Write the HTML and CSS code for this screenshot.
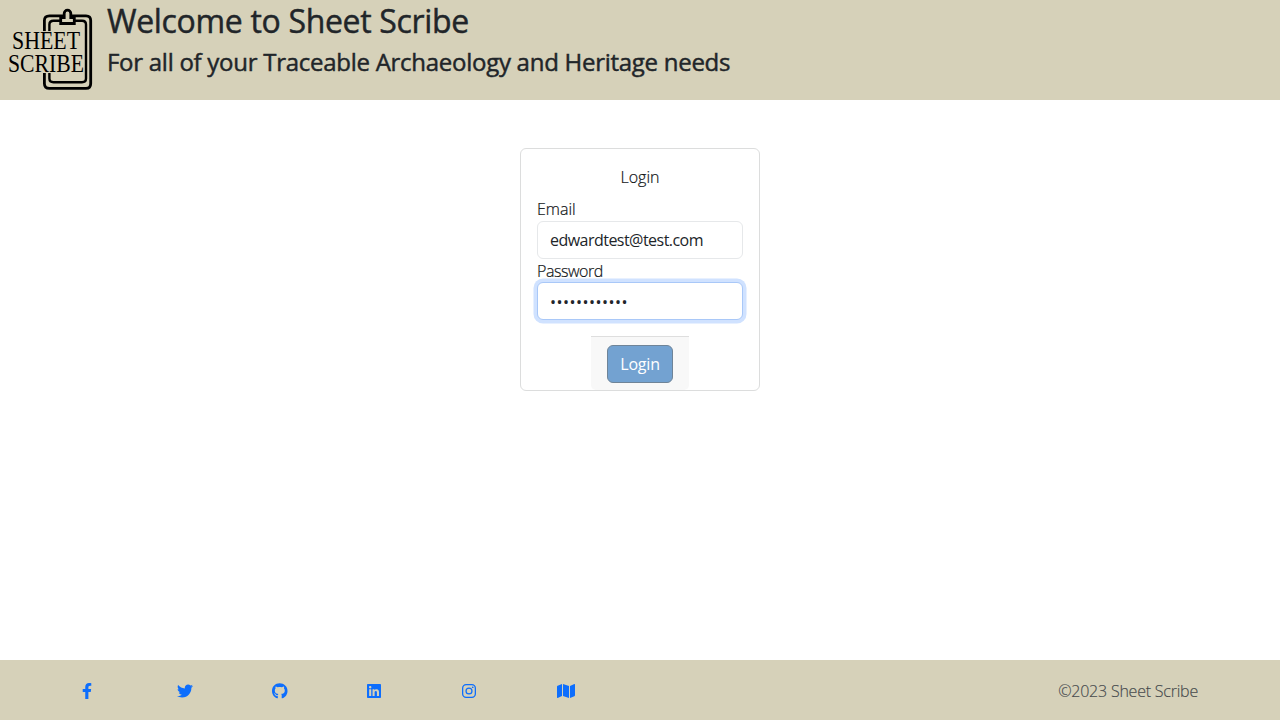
FILE: index.html
```
<!DOCTYPE html>
<html lang="en">
<head>
<meta charset="utf-8">
<title>Sheet Scribe</title>
<link rel="stylesheet" href="styles.css">
</head>
<body>
<header class="header">
  <svg class="logo" viewBox="0 0 100 100" role="img" aria-label="Sheet Scribe logo">
    <g fill="none" stroke="#000">
      <path stroke-width="2.8" d="M44.4 31.500V20.5Q44.4 15.8 49.5 15.8H86Q90.7 15.8 90.7 20.5V83.5Q90.7 88.4 86 88.4H49.5Q44.4 88.4 44.4 83.5V73"/>
      <path stroke-width="2.4" d="M49.4 31.500V24.5Q49.4 20.8 53.5 20.8H82Q86 20.8 86 24.5V78.5Q86 82.2 82 82.2H53.5Q49.4 82.2 49.4 78.5V73"/>
    </g>
    <path d="M60.7 17.500H64.200V13.500A3.3 3.3 0 0 1 70.800 13.500V17.500H74.3V23.500H60.7Z" fill="#d6d1b9" stroke="#000" stroke-width="2.8"/>
    <g class="logo-text">
      <text x="12" y="49" textLength="68" lengthAdjust="spacingAndGlyphs">SHEET</text>
      <text x="8" y="71.6" textLength="76" lengthAdjust="spacingAndGlyphs">SCRIBE</text>
    </g>
  </svg>
  <div class="titles">
    <h1 class="title">Welcome to Sheet Scribe</h1>
    <h2 class="subtitle">For all of your Traceable Archaeology and Heritage needs</h2>
  </div>
</header>
<main class="main">
  <form class="card">
    <div class="card-body">
      <div class="card-title">Login</div>
      <label class="label" for="email">Email</label>
      <input class="input" id="email" type="text" value="edwardtest@test.com">
      <label class="label label-password" for="password">Password</label>
      <div class="input input-focus" id="password"><span class="dots">••••••••••••</span></div>
    </div>
    <div class="card-footer"><button class="button" type="button"><span class="button-text">Login</span></button></div>
  </form>
</main>
<footer class="footer">
  <nav class="links">
    <a class="link"><svg class="icon" style="width:10px" viewBox="0 0 320 512"><path d="M279.14 288l14.22-92.66h-88.91v-60.13c0-25.35 12.42-50.06 52.24-50.06h40.42V6.26S260.43 0 225.36 0c-73.22 0-121.08 44.38-121.08 124.72v70.62H22.89V288h81.39v224h100.17V288z"/></svg></a>
    <a class="link"><svg class="icon" style="width:16px" viewBox="0 0 512 512"><path d="M459.37 151.716c.325 4.548.325 9.097.325 13.645 0 138.72-105.583 298.558-298.558 298.558-59.452 0-114.68-17.219-161.137-47.106 8.447.974 16.568 1.299 25.34 1.299 49.055 0 94.213-16.568 130.274-44.832-46.132-.975-84.792-31.188-98.112-72.772 6.498.974 12.995 1.624 19.818 1.624 9.421 0 18.843-1.3 27.614-3.573-48.081-9.747-84.143-51.98-84.143-102.985v-1.299c13.969 7.797 30.214 12.67 47.431 13.319-28.264-18.843-46.781-51.005-46.781-87.391 0-19.492 5.197-37.36 14.294-52.954 51.655 63.675 129.3 105.258 216.365 109.807-1.624-7.797-2.599-15.918-2.599-24.04 0-57.828 46.782-104.934 104.934-104.934 30.213 0 57.502 12.67 76.67 33.137 23.715-4.548 46.456-13.32 66.599-25.34-7.798 24.366-24.366 44.833-46.132 57.827 21.117-2.273 41.584-8.122 60.426-16.243-14.292 20.791-32.161 39.308-52.628 54.253z"/></svg></a>
    <a class="link"><svg class="icon" style="width:15.5px" viewBox="0 0 496 512"><path d="M165.9 397.4c0 2-2.3 3.6-5.2 3.6-3.3.3-5.6-1.3-5.6-3.6 0-2 2.3-3.6 5.2-3.6 3-.3 5.6 1.3 5.6 3.6zM244.8 8C106.1 8 0 113.3 0 252c0 110.9 69.8 205.8 169.5 239.2 12.8 2.3 17.3-5.6 17.3-12.1 0-6.2-.3-40.4-.3-61.4 0 0-70 15-84.7-29.8 0 0-11.4-29.1-27.8-36.6 0 0-22.9-15.7 1.6-15.4 0 0 24.9 2 38.6 25.8 21.9 38.6 58.6 27.5 72.9 20.9 2.3-16 8.8-27.1 16-33.7-55.9-6.2-112.3-14.3-112.3-110.5 0-27.5 7.6-41.3 23.6-58.9-2.6-6.5-11.1-33.3 2.6-67.9 20.9-6.5 69 27 69 27 20-5.6 41.5-8.5 62.8-8.5s42.8 2.9 62.8 8.5c0 0 48.1-33.6 69-27 13.7 34.7 5.2 61.4 2.6 67.9 16 17.7 25.8 31.5 25.8 58.9 0 96.5-58.9 104.2-114.8 110.5 9.2 7.9 17 22.9 17 46.4 0 33.7-.3 75.4-.3 83.6 0 6.5 4.6 14.4 17.3 12.1C428.2 457.8 496 362.9 496 252 496 113.3 383.5 8 244.8 8z"/></svg></a>
    <a class="link"><svg class="icon" style="width:14px" viewBox="0 0 448 512"><path d="M416 32H31.9C14.3 32 0 46.5 0 64.3v383.4C0 465.5 14.3 480 31.9 480H416c17.6 0 32-14.5 32-32.3V64.3c0-17.8-14.4-32.3-32-32.3zM135.4 416H69V202.2h66.5V416zm-33.2-243c-21.3 0-38.5-17.3-38.5-38.5S80.9 96 102.2 96c21.2 0 38.5 17.3 38.5 38.5 0 21.3-17.2 38.5-38.5 38.5zm282.1 243h-66.4V312c0-24.8-.5-56.7-34.5-56.7-34.6 0-39.9 27-39.9 54.9V416h-66.4V202.2h63.7v29.2h.9c8.9-16.8 30.6-34.5 62.9-34.5 67.2 0 79.7 44.3 79.7 101.9V416z"/></svg></a>
    <a class="link"><svg class="icon" style="width:14px" viewBox="0 0 448 512"><path fill-rule="evenodd" d="M132 32H316A132 132 0 0 1 448 164V348A132 132 0 0 1 316 480H132A132 132 0 0 1 0 348V164A132 132 0 0 1 132 32ZM135 72A94 94 0 0 0 41 166V346A94 94 0 0 0 135 440H313A94 94 0 0 0 407 346V166A94 94 0 0 0 313 72ZM224 141A115 115 0 1 1 224 371A115 115 0 1 1 224 141ZM224 181A75 75 0 1 0 224 331A75 75 0 1 0 224 181ZM343.500 109.500A27 27 0 1 1 343.500 163.500A27 27 0 1 1 343.500 109.500Z"/></svg></a>
    <a class="link"><svg class="icon" style="width:18px" viewBox="0 0 576 512"><path d="M0 117.660v346.320c0 11.320 11.430 19.060 21.940 14.860L160 416V32L20.120 87.950A32.006 32.006 0 0 0 0 117.660zM192 416l192 64V96L192 32v384zM554.060 33.160L416 96v384l139.880-55.950A31.996 31.996 0 0 0 576 394.340V48.020c0-11.320-11.430-19.060-21.940-14.860z"/></svg></a>
  </nav>
  <div class="copyright">©2023 Sheet Scribe</div>
</footer>
</body>
</html>
```
FILE: styles.css
```
* { box-sizing: border-box; }
body {
  margin: 0;
  height: 720px;
  display: flex;
  flex-direction: column;
  background: #fff;
  color: #212529;
  font: 400 16px/24px "Open Sans", "Noto Sans", sans-serif;
}
.header { display: flex; height: 100px; background: #d6d1b9; }
.logo { width: 100px; height: 100px; }
.logo-text {
  font: 25px "Liberation Serif", serif;
  fill: #000;
  stroke: #d6d1b9;
  stroke-width: 1.6px;
  paint-order: stroke;
}
.titles { padding-left: 7px; }
.title, .subtitle { margin: 0; font-weight: 500; white-space: nowrap; -webkit-text-stroke: 0.45px #212529; }
.title { font-size: 32px; line-height: 38px; margin-top: 2px; letter-spacing: -0.33px; }
.subtitle { font-size: 24px; line-height: 29px; margin-top: 7px; letter-spacing: -0.27px; }
.main { flex: 1; display: flex; justify-content: center; align-items: flex-start; padding-top: 48px; }
.card {
  width: 240px;
  height: 243px;
  border: 1px solid #dcdddd;
  border-radius: 6px;
  display: flex;
  flex-direction: column;
  align-items: center;
  font-weight: 300;
}
.card-body { width: 100%; height: 187px; padding: 16px; }
.card-title { height: 32px; text-align: center; }
.card-title, .label { color: #111417; -webkit-text-stroke: 0.2px #111417; }
.label { display: block; height: 24px; }
.label-password { height: 23px; letter-spacing: -0.45px; }
.input {
  display: block;
  width: 100%;
  height: 38px;
  padding: 6px 12px;
  border: 1px solid #e6e8ea;
  border-radius: 6px;
  background: #fff;
  color: #212529;
  font: 400 16px/24px "Open Sans", "Noto Sans", sans-serif;
  letter-spacing: -0.53px;
}
.input-focus { padding-top: 7px; border-color: #a9c8f8; box-shadow: 0 0 0 3.5px #d0e2ff; }
.dots { letter-spacing: 0.48px; }
.card-footer {
  width: 98px;
  height: 54px;
  padding: 8px 16px;
  border-top: 1px solid #dedede;
  border-radius: 0 0 5px 5px;
  background: #f8f8f8;
}
.button {
  width: 66px;
  height: 38px;
  padding: 0;
  border: 1px solid #6f8498;
  border-radius: 6px;
  background: #73a2d1;
  color: #fff;
  font: 400 16px/24px "Open Sans", "Noto Sans", sans-serif;
}
.button-text { letter-spacing: -0.2px; }
.footer {
  height: 60px;
  padding: 0 82px;
  display: flex;
  align-items: center;
  justify-content: space-between;
  background: #d6d1b9;
}
.links { display: flex; }
.link { width: 95px; height: 16px; margin-top: 2px; }
.icon { display: block; height: 16px; fill: #0d6efd; }
.copyright { font-weight: 300; color: #45494c; -webkit-text-stroke: 0.15px #45494c; letter-spacing: -0.22px; margin-top: 2px; }
```
